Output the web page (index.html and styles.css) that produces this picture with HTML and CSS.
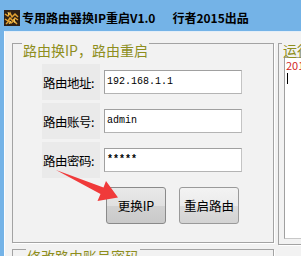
FILE: index.html
```html
<!DOCTYPE html>
<html lang="zh-CN">
<head>
 <meta charset="UTF-8">
 <meta name="viewport" content="width=device-width, initial-scale=1.0">
 <title>专用路由器换IP重启V1.0</title>
 <link rel="stylesheet" href="styles.css">
</head>
<body>

 <div class="window">
 <div class="titlebar">
 <svg class="app-icon" width="16" height="16" viewBox="0 0 16 16">
 <rect width="16" height="16" fill="#2e2015"/>
 <path d="M1 4l3 2 2-3 2 4 3-3 3 3M1 9l3 2 2-3 3 3 2-3 3 2M2 14l3-3 2 2 3-2 3 3" stroke="#e3a232" stroke-width="1.5" fill="none"/>
 <path d="M4 2l1 3M10 9l1 4M7 11l-2 3" stroke="#f6d36a" stroke-width="1" fill="none"/>
 </svg>
 <span class="title">专用路由器换IP重启V1.0</span>
 <span class="author">行者2015出品</span>
 </div>

 <div class="client">
 <div class="col-left">
 <!-- 换IP / 重启 -->
 <div class="group group-main">
 <div class="group-head"><span>路由换IP，路由重启</span></div>
 <div class="form">
 <div class="row"><label>路由地址:</label><div class="edit">192.168.1.1</div></div>
 <div class="row"><label>路由账号:</label><div class="edit">admin</div></div>
 <div class="row"><label>路由密码:</label><div class="edit pass">*****</div></div>
 <div class="buttons">
 <button class="btn hot">更换IP</button>
 <button class="btn">重启路由</button>
 </div>
 </div>
 </div>

 <!-- 修改账号密码 -->
 <div class="group group-account">
 <div class="group-head"><span>修改路由账号密码</span></div>
 </div>
 </div>

 <!-- 运行日志 -->
 <div class="group group-log">
 <div class="group-head"><span>运行日志</span></div>
 <div class="log">
 <div class="log-line">2015-05-06 运行</div>
 <div class="caret"></div>
 </div>
 </div>
 </div>
 </div>

 <svg class="arrow" width="301" height="256" viewBox="0 0 301 256">
 <polygon points="56,170 103.5,187.5 106,181 118,197.5 97.5,201 100.5,194" fill="#f03a3a"/>
 </svg>

</body>
</html>
```

FILE: styles.css
```css
/* Gaya umum */
body {
margin: 0;
width: 301px;
height: 256px;
overflow: hidden;
position: relative;
font-family: "Noto Sans CJK SC", sans-serif;
color: #000;
}

/* Jendela */
.window {
display: flex;
flex-direction: column;
height: 256px;
background: #74b3e7;
}

.titlebar {
display: flex;
align-items: flex-start;
height: 31px;
padding: 10px 0 0 4px;
box-sizing: border-box;
flex-shrink: 0;
}

.app-icon {
display: block;
flex-shrink: 0;
}

.title, .author {
font-size: 12px;
font-weight: bold;
line-height: 16px;
white-space: nowrap;
}

.title { margin-left: 2px; }
.author { margin-left: 17px; }

/* Area isi */
.client {
flex: 1;
display: flex;
gap: 4px;
margin-left: 4px;
padding: 11px 0 0 7px;
background: #f2f2f2;
border-top: 1px solid #e3eef8;
border-left: 1px solid #fbfdff;
overflow: hidden;
}

.col-left {
display: flex;
flex-direction: column;
gap: 4px;
flex-shrink: 0;
}

/* Group box */
.group {
border: 1px solid #a3a3a3;
border-top: none;
box-shadow: 1px 1px 0 #fff;
}

.group-head {
display: flex;
height: 14px;
margin: 0 -1px;
}

.group-head::before {
content: "";
width: 9px;
border-top: 1px solid #a3a3a3;
border-left: 1px solid #a3a3a3;
}

.group-head::after {
content: "";
flex: 1;
border-top: 1px solid #a3a3a3;
border-right: 1px solid #a3a3a3;
}

.group-head span {
padding: 0 1px;
font-size: 14px;
line-height: 14px;
color: #8e8e1c;
white-space: nowrap;
}

.group-main {
width: 260px;
}

.form {
display: flex;
flex-direction: column;
gap: 15px;
padding: 13px 0 18px 29px;
}

.row {
display: flex;
align-items: center;
height: 24px;
}

.row label {
display: flex;
align-items: center;
width: 57px;
height: 36px;
margin-right: 4px;
padding-left: 1px;
background: #eaeaea;
font-size: 12.5px;
letter-spacing: -0.5px;
white-space: nowrap;
}

.edit {
width: 134px;
height: 22px;
padding-left: 2px;
border: 1px solid #a0a0a0;
border-right-color: #c4c4c4;
border-bottom-color: #b4b4b4;
background: #fff;
font-family: "Liberation Mono", monospace;
font-size: 10px;
line-height: 22px;
}

.pass {
font-weight: bold;
}

/* Tombol */
.buttons {
display: flex;
gap: 13px;
margin-left: 64px;
}

.btn {
width: 60px;
height: 37px;
padding: 0;
border: 1px solid #9a9a9a;
border-radius: 3px;
background: linear-gradient(#f3f3f3 0%, #ebebeb 50%, #dddddd 51%, #d3d3d3 100%);
font-family: "Noto Sans CJK SC", sans-serif;
font-size: 12.5px;
color: #000;
}

.btn.hot {
border-color: #8a8a8a;
background: linear-gradient(#e9e9e9 0%, #e0e0e0 50%, #d2d2d2 51%, #c9c9c9 100%);
}

/* Group bawah */
.group-account {
width: 260px;
height: 30px;
margin-top: 2px;
}

.group-account .group-head::before {
width: 13px;
}

/* Log */
.group-log {
width: 140px;
align-self: flex-start;
padding-bottom: 5px;
}

.group-log .group-head::before {
width: 3px;
}

.log {
height: 179px;
margin-left: 5px;
padding: 1px 0 0 1px;
border: 1px solid #a0a0a0;
border-right-color: #d0d0d0;
border-bottom-color: #c8c8c8;
background: #fff;
overflow: hidden;
}

.log-line {
font-size: 11px;
line-height: 13px;
color: #d21f1f;
white-space: nowrap;
}

.caret {
width: 1px;
height: 11px;
margin: 1px 0 0 1px;
background: #000;
}

/* Panah merah */
.arrow {
position: absolute;
left: 0;
top: 0;
pointer-events: none;
}
```
